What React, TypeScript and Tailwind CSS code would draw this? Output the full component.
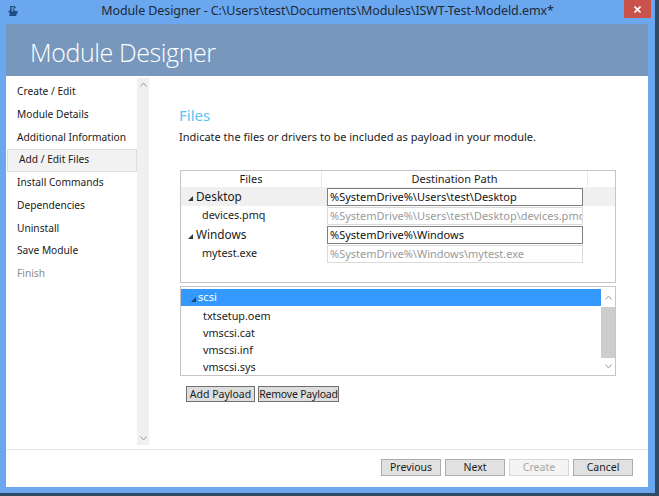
import React from "react";

const Tri = ({ className = "" }: { className?: string }) => (
  <svg width="5" height="5" viewBox="0 0 5 5" className={className}>
    <polygon points="5,0 5,5 0,5" fill="currentColor" />
  </svg>
);

const Chevron = ({ up }: { up?: boolean }) => (
  <svg width="7" height="5" viewBox="0 0 7 5">
    <polyline
      points={up ? "0.5,4.5 3.5,1 6.5,4.5" : "0.5,0.5 3.5,4 6.5,0.5"}
      fill="none"
      stroke="#9a9a9a"
      strokeWidth="1"
    />
  </svg>
);

const navItems = [
  "Create / Edit",
  "Module Details",
  "Additional Information",
  "Add / Edit Files",
  "Install Commands",
  "Dependencies",
  "Uninstall",
  "Save Module",
  "Finish",
];

const rows = [
  { name: "Desktop", folder: true, path: "%SystemDrive%\\Users\\test\\Desktop", sel: true },
  { name: "devices.pmq", folder: false, path: "%SystemDrive%\\Users\\test\\Desktop\\devices.pmq" },
  { name: "Windows", folder: true, path: "%SystemDrive%\\Windows" },
  { name: "mytest.exe", folder: false, path: "%SystemDrive%\\Windows\\mytest.exe" },
];

const drivers = ["txtsetup.oem", "vmscsi.cat", "vmscsi.inf", "vmscsi.sys"];

export default function App() {
  return (
    <div className="w-[659px] h-[496px] bg-[#6aa7ee] border-r-[4px] border-b-[3px] border-[#2f4a63] flex flex-col overflow-hidden font-['Noto_Sans',sans-serif] text-[11px] text-[#1b1b1b]">
      {/* title bar */}
      <div className="h-[24px] relative flex items-center justify-center shrink-0">
        <svg className="absolute left-[7px] top-[5px]" width="12" height="12" viewBox="0 0 12 12">
          <path d="M3 1h5l1 2-2 1 1 2h3l-2 5H2l1-3-2-1 2-2z" fill="#1d4f86" />
          <path d="M4 2h3l1 1.5-2 1 1 2H4.5z" fill="#5a8ac0" />
        </svg>
        <span className="text-[12.5px] leading-[16px] text-[#1d2a38] tracking-[-0.1px] mt-[-2px]">
          Module Designer - C:\Users\test\Documents\Modules\ISWT-Test-Modeld.emx*
        </span>
        <div className="absolute right-[4px] top-0 w-[27px] h-[18px] bg-[#c9524a] flex items-center justify-center">
          <svg width="7" height="7" viewBox="0 0 7 7">
            <path d="M0.5 0.5L6.5 6.5M6.5 0.5L0.5 6.5" stroke="#fff" strokeWidth="1.6" />
          </svg>
        </div>
      </div>

      {/* client */}
      <div className="flex-1 ml-[6px] mr-[7px] mb-[6px] bg-white flex flex-col min-h-0">
        <div className="h-[52px] bg-[#7798bc] flex items-center pl-[24px] shrink-0">
          <span className="font-['Open_Sans',sans-serif] font-light text-[25px] leading-[30px] text-white tracking-[-0.4px] mt-[4px]">
            Module Designer
          </span>
        </div>

        <div className="flex-1 flex min-h-0">
          {/* nav */}
          <div className="w-[131px] pt-[4.5px] flex flex-col shrink-0 text-[10.2px]">
            {navItems.map((t, i) => (
              <div
                key={t}
                className={
                  "h-[22.75px] flex items-center pl-[11px] " +
                  (i === 3 ? "bg-[#f2f2f2] border border-[#dedede] pl-[10px] ml-[1px]" : "") +
                  (i === 8 ? " text-[#8c8c8c]" : "")
                }
              >
                {t}
              </div>
            ))}
          </div>
          {/* nav scrollbar */}
          <div className="w-[12px] mt-[2px] mb-[4px] bg-[#f0f0f0] flex flex-col items-center justify-between py-[4px] shrink-0">
            <Chevron up />
            <Chevron />
          </div>

          {/* main */}
          <div className="flex-1 pl-[30px] pt-[29px]">
            <div className="text-[15px] text-[#5cc3f0] leading-[20px]">Files</div>
            <div className="mt-[4px] text-[11px] leading-[16px]">
              Indicate the files or drivers to be included as payload in your module.
            </div>

            {/* table */}
            <div className="mt-[25px] ml-[1px] w-[436px] h-[113px] border border-[#c5c5c5]">
              <div className="flex h-[16px] items-center">
                <div className="w-[141px] text-center border-r border-[#e8e8e8] h-full leading-[16px]">Files</div>
                <div className="w-[266px] text-center border-r border-[#e8e8e8] h-full leading-[16px]">Destination Path</div>
                <div className="flex-1" />
              </div>
              {rows.map((r) => (
                <div key={r.name} className={"flex h-[19px] " + (r.sel ? "bg-[#f0f0f0]" : "")}>
                  <div className="w-[146px] flex items-center">
                    {r.folder ? (
                      <>
                        <Tri className="ml-[7px] mr-[3px] mt-[3px] text-[#333]" />
                        <span className="text-[11.8px]">{r.name}</span>
                      </>
                    ) : (
                      <span className="ml-[21px] text-[10.8px]">{r.name}</span>
                    )}
                  </div>
                  <div
                    className={
                      "w-[256px] h-[18px] mt-[1px] border px-[2px] leading-[16px] overflow-hidden whitespace-nowrap " +
                      (r.folder ? "border-[#7f7f7f] bg-white text-[#111]" : "border-[#dadada] text-[#9a9a9a]")
                    }
                  >
                    {r.path}
                  </div>
                </div>
              ))}
            </div>

            {/* drivers box */}
            <div className="mt-[3px] ml-[1px] w-[436px] h-[90px] border border-[#c5c5c5] flex py-[2px]">
              <div className="flex-1 flex flex-col">
                <div className="h-[17px] bg-[#3399ff] text-white flex items-center shrink-0">
                  <Tri className="ml-[10px] mr-[2px] mt-[3px] text-[#1d3f66]" />
                  <span className="text-[11.2px]">scsi</span>
                </div>
                <div className="pt-[1.5px] flex flex-col">
                  {drivers.map((d) => (
                    <div key={d} className="h-[17px] flex items-center pl-[22px] text-[10.8px]">
                      {d}
                    </div>
                  ))}
                </div>
              </div>
              <div className="w-[14px] flex flex-col items-center mt-[-1px] mb-[-1px]">
                <div className="h-[19px] flex items-center"><Chevron up /></div>
                <div className="w-[14px] flex-1 bg-[#cdcdcd]" />
                <div className="h-[16px] flex items-center"><Chevron /></div>
              </div>
            </div>

            <div className="mt-[10px] ml-[7px] flex gap-[3px]">
              <button className="h-[16px] w-[69px] bg-[#dedede] border border-[#707070] text-[10.5px] leading-[14px] text-center whitespace-nowrap">
                Add Payload
              </button>
              <button className="h-[16px] w-[81px] bg-[#dedede] border border-[#707070] text-[10.5px] leading-[14px] text-center whitespace-nowrap tracking-[-0.2px]">
                Remove Payload
              </button>
            </div>
          </div>
        </div>

        {/* footer */}
        <div className="h-[38px] border-t border-[#e3e3e3] flex items-start justify-end pr-[15px] pt-[9px] gap-[4px] shrink-0">
          {["Previous", "Next", "Create", "Cancel"].map((b) => (
            <button
              key={b}
              className={
                "w-[60px] h-[17px] border text-[10.5px] leading-[15px] text-center " +
                (b === "Create"
                  ? "bg-[#f4f4f4] border-[#d9d9d9] text-[#a8a8a8]"
                  : "bg-[#e1e1e1] border-[#adadad] text-[#1b1b1b]")
              }
            >
              {b}
            </button>
          ))}
        </div>
      </div>
    </div>
  );
}
